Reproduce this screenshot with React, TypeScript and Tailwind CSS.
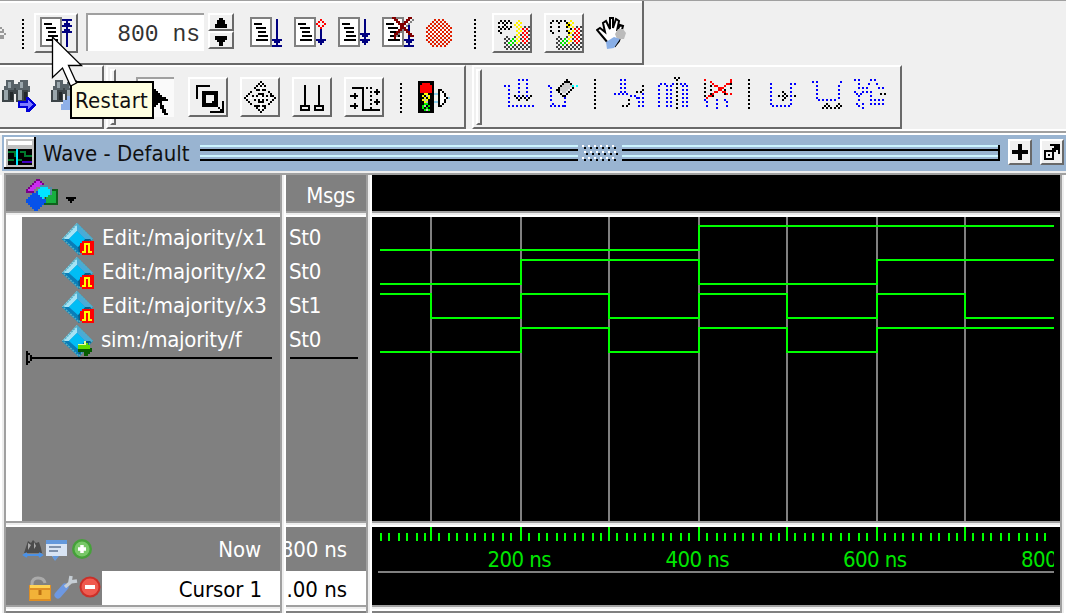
import React from "react";

type Kids = { children?: React.ReactNode };

/* Icon canvas drawn on a grid of 2px cells. */
function Icon({ w, h, className = "", children }: Kids & { w: number; h: number; className?: string }) {
  return (
    <svg width={w * 2} height={h * 2} viewBox={`0 0 ${w} ${h}`} shapeRendering="crispEdges" className={`block shrink-0 ${className}`}>
      {children}
    </svg>
  );
}

/* Rows of cells: "x,y" or "x,y>x2,y2:step", separated by blanks. */
function Dots({ c, d }: { c: string; d: string }) {
  const path = d
    .split(" ")
    .map((seg) => {
      const [line, s] = seg.split(":");
      const [a, b] = line.split(">");
      const [x, y] = a.split(",").map(Number);
      const [x2, y2] = (b ?? a).split(",").map(Number);
      const n = Math.max(Math.abs(x2 - x), Math.abs(y2 - y));
      const step = Number(s ?? 1);
      let out = "";
      for (let i = 0; i <= n; i += step) {
        const t = n ? i / n : 0;
        out += `M${Math.round(x + (x2 - x) * t)} ${Math.round(y + (y2 - y) * t)}h1v1h-1z`;
      }
      return out;
    })
    .join("");
  return <path fill={c} d={path} />;
}

const K = "#000";
const B = "#0000ff";
const N = "#000080";
const R = "#ff0000";

function Doc() {
  return (
    <>
      <path fill="#808080" d="M0 0h11v15H0z" />
      <path fill="#fff" d="M1 1h9v13H1z" />
      <path fill={K} d="M2 3h4v1H2zM3 5h5v1H3zM4 7h4v1H4zM4 9h5v1H4zM3 11h6v1H3z" />
    </>
  );
}

function Sep({ className = "" }: { className?: string }) {
  return (
    <Icon w={1} h={15} className={className}>
      <Dots c={K} d="0,0>0,14:2" />
    </Icon>
  );
}

function Button({ className = "", children }: Kids & { className?: string }) {
  return (
    <div className={`flex shrink-0 items-center justify-center border-t-2 border-r-2 border-b-2 border-l-2 border-t-white border-l-white border-r-[#696969] border-b-[#696969] bg-[#f0f0f0] ${className}`}>
      {children}
    </div>
  );
}

function Handle() {
  return <div className="ml-[2px] h-[56px] w-[6px] shrink-0 border-2 border-t-white border-l-white border-r-[#696969] border-b-[#696969]" />;
}

function Binoculars({ tail }: { tail: "arrow" | "lens" }) {
  return (
    <svg width="34" height="34" viewBox="0 0 34 34" className="block shrink-0" shapeRendering="crispEdges">
      <path fill="#586268" d="M4 2h8v4h4V4h4v2h-2V2h8v6h2v6H2V8h2z" />
      <path fill="#3d4549" d="M0 12h12v12H0zM14 12h12v12H14zM12 10h2v6h-2z" />
      <path fill="#9aa6ac" d="M2 12h4v10H2zM16 12h4v10h-4zM6 4h3v6H6zM18 4h3v6h-3z" />
      <path fill="#22282b" d="M8 14h3v8H8zM22 14h3v8h-3z" />
      {tail === "arrow" ? (
        <>
          <path fill="#0000d8" d="M16 23h8v-4h3l7 8-7 7h-3v-4h-8z" />
          <path fill="#7d7dff" d="M18 25h8v-3l5 5-5 4v-3h-8z" />
        </>
      ) : (
        <path fill="#8fb0e8" d="M12 22h4v-4h8v14H10v-6h2z" />
      )}
    </svg>
  );
}

function Scene({ loops }: { loops: boolean }) {
  return (
    <Icon w={16} h={15} className="mt-[3px] ml-[3px]">
      <Dots c="#404040" d="4,8 3,9>15,9:2 4,10>14,10:2 3,11>15,11:2 4,12>14,12:2 3,13>15,13:2 4,14>14,14:2 15,3>15,9:2 13,3 11,3>11,9:2 8,8 14,4" />
      <Dots c="#fff000" d="10,0 9,1 8,2 11,1 10,2>10,10:2 9,3>9,11:2 11,3 11,5" />
      <Dots c={R} d="13,5>13,11:2 12,4>12,10:2 14,4>14,10:2" />
      <Dots c="#00e000" d="6,10 7,11 8,10 7,9 6,12 5,11" />
      {loops ? (
        <Dots c={K} d="0,1>0,5:2 1,0>3,0:2 4,1>4,5:2 5,0>7,0:2 8,1>8,5:2 1,6 9,6 9,2 10,4" />
      ) : (
        <Dots c={K} d="0,1>0,3:2 1,0>5,0:2 6,1>6,3:2 1,4>5,4:2 2,1>4,3 4,1>2,3 0,5 1,6" />
      )}
    </Icon>
  );
}

function Gem({ badge }: { badge: "wave" | "arrow" }) {
  return (
    <svg width="34" height="34" viewBox="0 0 34 34" className="mt-[1px] block shrink-0">
      <path fill="#1890cc" d="M15 0l16 16-14 16L0 16z" />
      <path fill="#a5e3f5" d="M15 0L0 16h7l8-8z" />
      <path fill="#48abd8" d="M15 0l16 16h-8l-8-8z" />
      <path fill="#087db8" d="M0 16h7l9 8 1 8z" />
      <path fill="#075c86" d="M31 16h-8l-7 8 1 8z" />
      <path fill="#00bdf5" d="M15 8l8 8-7 8-9-8z" />
      <path fill="none" stroke="#58aec0" strokeWidth="1.5" strokeDasharray="2 1" d="M15 1l15 15-13 15L1 16z" />
      {badge === "wave" ? (
        <g shapeRendering="crispEdges">
          <path fill="#ff0000" d="M20 18h12v14H20v-2h-2V20h2z" />
          <path fill="none" stroke="#ffff00" strokeWidth="2" d="M20 29h3v-8h4v8h3" />
        </g>
      ) : (
        <g shapeRendering="crispEdges">
          <path fill="#075c00" d="M16 22h6v-5h2v2h2v2h2v2h2v4h-2v2h-2v2h-4v-4h-6z" />
          <path fill="#5edc00" d="M16 20h6v-4h2v2h2v2h2v4H16z" />
          <path fill="#e7ff9d" d="M16 19h6v-3h2v4h-8z" />
        </g>
      )}
    </svg>
  );
}

function TopBar() {
  return (
    <div className="flex h-[64px] w-[644px] items-start border-r-2 border-b-2 border-[#696969] bg-[#f0f0f0] pt-[12px] shadow-[inset_0_2px_0_#fff]">
      <Icon w={3} h={7} className="mt-[14px]">
        <Dots c="#999" d="0,0>2,3 2,3>0,5 0,2 0,4 1,5" />
      </Icon>
      <Sep className="mt-[6px] ml-[16px]" />
      <Button className="ml-[10px] h-[40px] w-[44px] justify-start pl-[4px]">
        <Icon w={16} h={15} className="-mt-[2px]">
          <Doc />
          <path fill={N} d="M13 1h1v14h-1zM11 1h5v1h-5zM12 3h3v1h-3zM11 4h5v1h-5zM12 6h3v1h-3zM11 7h5v1h-5z" />
        </Icon>
      </Button>
      <div className="ml-[8px] flex h-[38px] w-[118px] items-center justify-end border-t-2 border-l-2 border-[#a0a0a0] bg-white pt-[4px] pr-[4px] font-['Liberation_Mono','monospace'] text-[23px] text-[#333]">
        800 ns
      </div>
      <div className="ml-[4px] flex w-[26px] flex-col">
        <Button className="h-[18px] w-[26px]">
          <Icon w={6} h={5} className="mt-[2px]"><path fill={K} d="M2 0h2v1h1v2h1v2H0V3h1V1h1z" /></Icon>
        </Button>
        <Button className="h-[18px] w-[26px]">
          <Icon w={6} h={5} className="mt-[2px]"><path fill={K} d="M0 0h6v2H5v1H4v2H2V3H1V2H0z" /></Icon>
        </Button>
      </div>
      <div className="mt-[4px] ml-[16px] flex gap-[12px]">
        <Icon w={16} h={15}>
          <Doc />
          <path fill={N} d="M13 1h1v13h-1zM11 11h5v1h-5zM12 12h3v1h-3zM11 14h5v1h-5z" />
        </Icon>
        <Icon w={16} h={15}>
          <Doc />
          <path fill={N} d="M13 6h1v8h-1zM11 11h5v1h-5zM12 12h3v1h-3z" />
          <Dots c={R} d="13,1 12,2 14,2 11,3 15,3 12,4 14,4 13,5" />
        </Icon>
        <Icon w={16} h={15}>
          <Doc />
          <path fill={N} d="M13 1h1v13h-1zM11 8h5v1h-5zM12 9h3v1h-3zM11 11h5v1h-5zM12 12h3v1h-3z" />
        </Icon>
        <Icon w={16} h={15}>
          <Doc />
          <path fill={N} d="M13 4h1v10h-1zM11 11h5v1h-5zM12 12h3v1h-3zM11 14h5v1h-5z" />
          <g transform="translate(1 1)"><Dots c="#808080" d="5,0>14,8 14,0>5,9 6,0>14,8" /></g>
          <Dots c="#800000" d="5,0>14,9 6,0>15,9 14,0>6,9 13,0>6,8 6,10" />
        </Icon>
        <Icon w={13} h={14} className="mt-[2px]">
          <Dots c="#e02000" d="4,0>8,0:2 3,1>9,1:2 2,2>10,2:2 1,3>11,3:2 0,4>12,4:2 1,5>11,5:2 0,6>12,6:2 1,7>11,7:2 0,8>12,8:2 1,9>11,9:2 0,10>12,10:2 1,11>11,11:2 2,12>10,12:2 3,13>9,13:2" />
          <Dots c="#fff" d="2,5 0,7 2,7 4,5 4,7 6,5 6,7 8,5 8,7 7,6 9,6 10,5 10,7 5,6 3,6" />
        </Icon>
      </div>
      <Sep className="mt-[6px] ml-[22px]" />
      <Button className="ml-[16px] h-[40px] w-[40px]"><Scene loops={false} /></Button>
      <Button className="ml-[12px] h-[40px] w-[40px]"><Scene loops /></Button>
      <svg width="30" height="34" viewBox="0 0 30 34" className="mt-[3px] ml-[12px] shrink-0">
        <path fill="#fff" stroke="#000" strokeWidth="2" d="M12 27L7 21 1 14l3-2 5 4-2-9 3-2 4 8V2h3v10l3-9 3 2-2 10 3-6 3 1-4 15-4 5z" />
        <path fill="#bbb" d="M22 13h5l3 4-2 6h-7l-2-5z" />
        <path fill="#88aee6" d="M10 26l8-5 6 2-6 9-7 1z" />
      </svg>
    </div>
  );
}

function SecondBars() {
  return (
    <div className="flex h-[64px]">
      <div className="flex w-[104px] shrink-0 items-start border-t-2 border-r-2 border-b-2 border-t-white border-r-[#696969] border-b-[#696969] pt-[11px] pl-[2px]">
        <Binoculars tail="arrow" />
        <div className="ml-[15px]"><Binoculars tail="lens" /></div>
      </div>
      <div className="ml-[2px] flex w-[360px] shrink-0 items-start border-2 border-t-white border-l-white border-r-[#696969] border-b-[#696969] pt-[2px]">
        <Handle />
        <div className="mt-[8px] ml-[20px] flex gap-[12px]">
          <div className="mr-[2px] flex h-[40px] w-[38px] items-center justify-center border-t-2 border-l-2 border-[#a0a0a0] bg-[#fafafa]">
            <Icon w={11} h={15} className="mt-[3px] ml-[5px]">
              <path fill={K} d="M1 0h1v1h1v1h1v1h1v1h1v1h1v1h2v1h1v1H7v2h1v2h1v2h1v1H8v-1H7v-2H6V9H5v1H4v1H3v1H1z" />
            </Icon>
          </div>
          <Button className="h-[40px] w-[40px]">
            <Icon w={14} h={14} className="mt-[4px] ml-[4px]">
              <path fill={K} d="M0 0h7v1H1v6H0zM3 3h8v8H3zM5 5v4h4V5z" fillRule="evenodd" />
              <path fill={K} d="M8 8h1v1h1v1h1v1h1v1h1V8h1v6H7v-1h5v-1h-1v-1h-1v-1H9V9H8z" />
            </Icon>
          </Button>
          <Button className="h-[40px] w-[40px]">
            <Icon w={16} h={16}>
              <Dots c={K} d="8,0>5,3 8,0>10,2 8,15>5,12 8,15>10,13 0,8>3,5 0,8>3,11 15,8>12,5 15,8>12,11 4,7>7,7:2 9,7>13,7:2 5,9>7,9:2 9,9>12,9:2 7,4>7,7:2 9,4>9,7:2 7,10>7,13:2 9,10>9,13:2 6,4 10,4 6,12 10,12 8,2 8,6 8,10" />
              <Dots c="#fff" d="8,1>8,14:2 1,8>14,8:2" />
            </Icon>
          </Button>
          <Button className="h-[40px] w-[40px]">
            <Icon w={12} h={13} className="mt-[2px]">
              <path fill={K} fillRule="evenodd" d="M2 0h1v10h2v3H0v-3h2zM1 11v1h3v-1zM9 0h1v10h2v3H7v-3h2zM8 11v1h3v-1z" />
            </Icon>
          </Button>
          <Button className="h-[40px] w-[40px]">
            <Icon w={15} h={12} className="mt-[4px] ml-[2px]">
              <path fill={K} d="M1 0h6v11h8v1H6V1H1zM0 4h4v1H0zM2 3h1v3H2zM0 9h4v1H0zM2 8h1v3H2zM12 2h3v1h-3zM13 1h1v3h-1zM12 7h3v1h-3zM13 6h1v3h-1z" />
              <Dots c={K} d="8,0>10,0:2 10,2>10,10:2" />
            </Icon>
          </Button>
        </div>
        <Sep className="mt-[14px] ml-[16px]" />
        <Icon w={16} h={16} className="mt-[12px] ml-[16px]">
          <path fill={K} d="M0 0h8v16H0z" />
          <path fill={R} d="M2 1h4v1h1v4H1V2h1z" />
          <Dots c="#ffff00" d="3,6 4,6 2,7 5,7 3,8 4,9 2,9 5,8 3,10" />
          <Dots c="#00f000" d="3,11 4,11 2,12 5,12 4,13 2,13 5,14 3,14" />
          <Dots c="#c0c0c0" d="4,7 3,9 3,12 4,14 4,10" />
          <path fill="#8fd0ee" d="M8 6h2v1H8zM8 10h2v1H8zM15 8h1v1h-1z" />
          <path fill={K} d="M10 4h2v1h1v1h1v2h1v1h-1v2h-1v1h-1v1h-2z" />
          <path fill="#fff" d="M11 5h1v1h1v2h1v1h-1v2h-1v1h-1z" />
        </Icon>
      </div>
      <div className="ml-[6px] flex w-[430px] shrink-0 items-start border-2 border-t-white border-l-white border-r-[#696969] border-b-[#696969] pt-[2px]">
        <Handle />
        <Icon w={15} h={16} className="mt-[10px] ml-[22px]">
          <Dots c={B} d="0,3 2,3>2,13:2 4,13>14,13:2 7,0>7,8:2 9,0 11,0>11,8:2" />
          <Dots c={K} d="5,8>7,10 7,10>9,8 9,8>11,10 11,10>13,8" />
        </Icon>
        <Icon w={15} h={16} className="mt-[10px] ml-[14px]">
          <path fill="#ccc" d="M9 1h1v1h1v1h1v1h-1v1h-1v1H9v1H7V6H6V5H5V4h1V3h1V2h2z" />
          <Dots c={B} d="0,3 1,4 1,6>1,10:2 2,12 1,13>7,13:2 8,9>8,13:2" />
          <Dots c={K} d="4,5>9,0 10,1>12,3 12,4>8,8 4,5>7,8 9,1 5,5" />
          <Dots c="#00ffff" d="12,3 14,3" />
        </Icon>
        <Sep className="mt-[10px] ml-[16px]" />
        <Icon w={15} h={16} className="mt-[10px] ml-[18px]">
          <Dots c={B} d="3,0>3,6:2 5,0>5,6:2 0,7 2,7 4,7 6,7 8,8 10,8 12,9>12,13:2 14,9>14,13:2 11,9 14,7" />
          <Dots c={K} d="14,3 14,5 13,6 11,6 7,10 7,12 6,13 4,13" />
        </Icon>
        <Icon w={16} h={16} className="mt-[8px] ml-[14px]">
          <Dots c={B} d="0,4>0,14:2 1,3 3,3 4,4>4,14:2 6,4>6,14:2 7,3 11,3 12,4>12,14:2 14,4>14,14:2 13,3" />
          <Dots c={K} d="9,1>9,15:2 8,0 10,0" />
        </Icon>
        <Icon w={14} h={15} className="mt-[10px] ml-[14px]">
          <Dots c={K} d="0,2>0,8:2 3,3>3,7:2 4,8 10,3>10,7:2 13,2>13,5:2" />
          <Dots c={R} d="0,0 3,1>11,7 13,1>1,9 13,0 13,7" />
          <Dots c={B} d="0,10 1,11 1,13 6,10>6,14:2 10,10 11,11 11,13" />
        </Icon>
        <Sep className="mt-[10px] ml-[16px]" />
        <Icon w={13} h={12} className="mt-[14px] ml-[20px]">
          <Dots c={B} d="0,0>0,10:2 1,11>9,11:2 10,0>10,10:2 12,0" />
          <Dots c={K} d="4,6 6,4>8,6 8,6>6,8 6,6 12,6" />
        </Icon>
        <Icon w={15} h={14} className="mt-[12px] ml-[16px]">
          <Dots c={B} d="0,0 2,0>2,8:2 3,9>11,9:2 13,2>13,9:2 14,0" />
          <Dots c={K} d="5,13 6,12 7,11 8,12 9,13 7,13 11,13 12,12 13,11 14,12 13,13" />
        </Icon>
        <Icon w={16} h={15} className="mt-[10px] ml-[12px]">
          <Dots c={B} d="0,0 2,0>2,4:2 4,4 6,4 7,2 8,0 10,0 11,2 12,4 14,4 0,6 1,7 2,8 3,7 4,6 6,6 8,6>8,10:2 2,10 1,12 2,13 4,14 4,12 10,10>14,10:2 8,12>14,12:2" />
          <Dots c={K} d="13,7 15,7" />
        </Icon>
      </div>
    </div>
  );
}

function TitleBar() {
  return (
    <div className="ml-[2px] flex h-[36px] items-start bg-[#99b4d1] pt-[2px] pl-[2px]">
      <Icon w={16} h={16}>
        <path fill={K} d="M0 0h16v16H0z" />
        <path fill="#fff" d="M0 0h15v1H1v14H0z" />
        <path fill="#c0c0c0" d="M1 1h14v14H1z" />
        <path fill="#fff" d="M2 2h12v2H2z" />
        <path fill={K} d="M2 6h12v8H2z" />
        <path fill="#007a2c" d="M2 7h4v3H5V8H2zM8 7h3v2h3v1h-4V8H8zM2 11h3v1H2zM7 11h2v1H7z" />
        <path fill="#4000c0" d="M9 12h5v1H9z" />
        <path fill="#00e8ff" d="M6 6h1v8H6z" />
      </Icon>
      <div className="mt-[2px] ml-[7px] w-[157px] text-[22px] leading-[30px] tracking-[0.02px] text-[#111]">Wave - Default</div>
      <Rails className="w-[378px]" />
      <svg width="44" height="16" viewBox="0 0 44 16" shapeRendering="crispEdges" className="mt-[8px]">
        {[0, 6, 12].map((y) =>
          Array.from({ length: 6 }, (_, i) => {
            const x = 4 + i * 6 + (y === 6 ? 2 : 0);
            return (
              <g key={`${y}-${i}`}>
                <path fill="#fff" d={`M${x} ${y}h2v2h-2z`} />
                <path fill="#000" d={`M${x + 2} ${y + 2}h2v2h-2z`} />
              </g>
            );
          }),
        )}
      </svg>
      <Rails className="w-[378px] border-r-2 border-black" />
      <Button className="mt-[2px] ml-[8px] h-[26px] w-[24px]">
        <Icon w={8} h={8}><path fill={K} d="M3 0h2v3h3v2H5v3H3V5H0V3h3z" /></Icon>
      </Button>
      <Button className="mt-[2px] ml-[8px] h-[26px] w-[24px]">
        <Icon w={8} h={8}>
          <path fill={K} d="M3 0h5v5H7V3H6v1H5v4H0V3h4V2h1V1H3zM1 4v3h3V4z" fillRule="evenodd" />
          <path fill={K} d="M2 5h1v1H2z" />
        </Icon>
      </Button>
    </div>
  );
}

function Rails({ className }: { className: string }) {
  return (
    <div className={`mt-[8px] flex h-[16px] shrink-0 flex-col justify-between ${className}`}>
      <div className="h-[6px] border-t-2 border-b-2 border-t-[#ccf4ff] border-b-black" />
      <div className="h-[6px] border-t-2 border-b-2 border-t-[#ccf4ff] border-b-black" />
    </div>
  );
}

function Sash() {
  return (
    <div className="flex h-[6px] shrink-0 flex-col">
      <div className="h-[2px] bg-[#a0a0a0]" />
      <div className="h-[2px] bg-[#eeeeee]" />
      <div className="h-[2px] bg-white" />
    </div>
  );
}

function VSash() {
  return (
    <div className="flex w-[6px] shrink-0">
      <div className="w-[2px] bg-[#a0a0a0]" />
      <div className="w-[2px] bg-[#eeeeee]" />
      <div className="w-[2px] bg-white" />
    </div>
  );
}

const signals = [
  { name: "Edit:/majority/x1", value: "St0", start: 0, edges: [698] },
  { name: "Edit:/majority/x2", value: "St0", start: 0, edges: [520, 698, 876] },
  { name: "Edit:/majority/x3", value: "St1", start: 1, edges: [430, 520, 608, 698, 786, 876, 964] },
  { name: "sim:/majority/f", value: "St0", start: 0, edges: [520, 608, 698, 786, 876] },
];

function NamePane() {
  return (
    <div className="flex w-[274px] shrink-0 flex-col bg-[#808080]">
      <div className="flex h-[36px] shrink-0 items-start pt-[4px] pl-[20px]">
        <Icon w={16} h={16}>
          <path fill="#10601c" d="M10 5h6v8H9z" />
          <path fill="#18b040" d="M10 6h5v6h-5z" />
          <Dots c="#780088" d="0,5>5,0 6,0 7,1 8,2 0,6>3,6" />
          <path fill="#cc2df0" d="M5 1h2v1h1v1H7v1H5v1H4v1H1V5h1V4h1V3h1V2h1z" />
          <path fill="#0752e8" d="M5 6h1v1h1v1h1v1h1v1h1v2H9v1H8v1H7v1H6v1H4v-1H3v-1H2v-1H1v-1H0v-2h1V9h1V8h1V7h2z" />
          <path fill="#00e5ff" d="M7 4h4v1h1v3h-1v1H9v1H8V9H7V8H6V5h1z" />
          <path fill="#5a8aa4" d="M7 3h4v1H7zM12 4h1v4h-1z" />
        </Icon>
        <Icon w={5} h={3} className="mt-[18px] ml-[8px]"><path fill={K} d="M0 0h5v1H4v1H3v1H2V2H1V1H0z" /></Icon>
      </div>
      <Sash />
      <div className="h-[304px] shrink-0 border-l-[16px] border-white pt-[5px]">
        {signals.map((s, i) => (
          <div key={s.name} className="flex h-[34px] pl-[40px]">
            <Gem badge={i < 3 ? "wave" : "arrow"} />
            <div className={`leading-[32px] whitespace-nowrap ${i < 3 ? "pl-[6px] tracking-[0px]" : "pl-[5px] tracking-[-0.25px]"}`}>{s.name}</div>
          </div>
        ))}
        <div className="-mt-[7px] flex items-center pl-[4px]">
          <Icon w={3} h={7}><path fill={K} fillRule="evenodd" d="M0 0h1v1h1v1h1v3H2v1H1v1H0zM1 2v3h1V2z" /></Icon>
          <div className="h-[2px] w-[240px] bg-black" />
        </div>
      </div>
      <Sash />
      <div className="flex h-[44px] shrink-0 items-start pl-[16px]">
        <svg width="74" height="24" viewBox="0 0 74 24" className="mt-[11px] shrink-0">
          <path fill="#4c4c4c" d="M4 9l2-6 3 2 2-3 3 3 3-1 2 6 1 5H2z" />
          <path fill="#aaa" d="M6 5l3 2-3 5zM12 4l2 4-2 3z" />
          <path fill="none" stroke="#4b91e5" strokeWidth="2" d="M2 17h18M5 15l-3 2 3 2M17 15l3 2-3 2" />
          <path fill="#d8e4f4" d="M24 2h21v16H36l-3 4-3-4h-6z" />
          <path fill="#6398dc" d="M24 2h21v4H24zM30 18h7l-4 5z" />
          <path stroke="#7e91ac" strokeWidth="2" d="M27 9h12M27 13h9" />
          <circle cx="60" cy="11" r="10" fill="#46a03a" />
          <circle cx="60" cy="11" r="7.5" fill="#78c768" />
          <path stroke="#fff" strokeWidth="3.5" d="M56 11h8M60 7v8" />
        </svg>
        <div className="ml-auto pt-[1px] pr-[19px] leading-[44px] tracking-[-0.1px]">Now</div>
      </div>
      <div className="flex h-[34px] shrink-0">
        <svg width="96" height="34" viewBox="0 0 96 34" className="shrink-0">
          <path fill="none" stroke="#aaa" strokeWidth="3" d="M26 17v-4q0-6 6-6t7 5" />
          <path fill="#dd8e25" d="M23 14h22v16H23z" />
          <path fill="#ffd253" d="M24 14h20v3H24z" />
          <path fill="#f2b238" d="M24 19h20v9H24z" />
          <path stroke="#bd7112" strokeWidth="3" d="M34 19v5" />
          <path stroke="#6d98e2" strokeWidth="7" strokeLinecap="round" d="M52 24l7-8" />
          <path fill="none" stroke="#c6ced5" strokeWidth="3.5" d="M59 16l6-5M65 5l-1 6 7-1" />
          <circle cx="84" cy="16" r="10.5" fill="#ca3029" />
          <circle cx="84" cy="16" r="8.5" fill="#ef5b50" />
          <path stroke="#fff" strokeWidth="4" d="M79 16h10" />
        </svg>
        <div className="flex-1 bg-white pr-[18px] text-right leading-[37px] tracking-[-0.1px] text-black">Cursor 1</div>
      </div>
      <Sash />
      <div className="h-[2px]" />
    </div>
  );
}

function ValuePane() {
  return (
    <div className="flex w-[80px] shrink-0 flex-col overflow-hidden bg-[#808080]">
      <div className="h-[36px] shrink-0 pr-[11px] text-right leading-[42px] tracking-[-0.4px]">Msgs</div>
      <Sash />
      <div className="h-[304px] shrink-0 pt-[5px]">
        {signals.map((s) => (
          <div key={s.name} className="h-[34px] pl-[3px] leading-[32px] tracking-[-0.3px]">{s.value}</div>
        ))}
        <div className="-mt-[1px] ml-[4px] h-[2px] w-[68px] bg-black" />
      </div>
      <Sash />
      <div className="flex h-[44px] shrink-0 justify-end overflow-hidden pt-[1px] pr-[19px] leading-[44px] tracking-[-0.1px] whitespace-nowrap">800 ns</div>
      <div className="flex h-[34px] shrink-0 justify-end overflow-hidden bg-white pr-[19px] leading-[37px] tracking-[0px] whitespace-nowrap text-black">0.00 ns</div>
      <Sash />
      <div className="h-[2px]" />
    </div>
  );
}

const grid = [430, 520, 608, 698, 786, 876, 964];

function wave(i: number) {
  const s = signals[i];
  const y = (v: number) => (v ? 9 : 33) + i * 34;
  let v = s.start;
  let d = `M8 ${y(v)}`;
  s.edges.forEach((e) => {
    d += `H${e - 371}`;
    v = 1 - v;
    d += `V${y(v)}`;
  });
  return `${d}H682`;
}

function WavePane() {
  const even = (n: number) => 2 * Math.floor(n / 2);
  const ticks = [380, 388, 398, 406, 416, 424]
    .concat(grid.flatMap((g) => [1, 2, 3, 4, 5, 6, 7, 8, 9].map((j) => even(g + 9 * j))))
    .map((x) => x - 372);
  return (
    <div className="flex w-[688px] shrink-0 flex-col bg-black">
      <div className="h-[36px] shrink-0" />
      <Sash />
      <svg width="688" height="304" viewBox="0 0 688 304" shapeRendering="crispEdges" className="block shrink-0">
        {grid.map((x) => <path key={x} fill="#808080" d={`M${x - 372} 0h2v304h-2z`} />)}
        {signals.map((s, i) => <path key={s.name} d={wave(i)} fill="none" stroke="#00ff00" strokeWidth="2" />)}
      </svg>
      <Sash />
      <svg width="688" height="78" viewBox="0 0 688 78" shapeRendering="crispEdges" className="block shrink-0">
        {ticks.map((x) => <path key={x} fill="#00ff00" d={`M${x} 6h2v8h-2z`} />)}
        {grid.map((x) => <path key={x} fill="#00ff00" d={`M${x - 372} 0h2v14h-2z`} />)}
        <path fill="#808080" d="M6 44h676v2H6z" />
        <svg width="682" height="44">
          <g fill="#00e600" fontSize="22">
            <text x="115.5" y="40" textLength="64">200 ns</text>
            <text x="293.5" y="40" textLength="64">400 ns</text>
            <text x="471" y="40" textLength="64">600 ns</text>
            <text x="649" y="40" textLength="64">800 ns</text>
          </g>
        </svg>
      </svg>
      <Sash />
      <div className="h-[2px] bg-[#808080]" />
    </div>
  );
}

export default function App() {
  return (
    <div className="relative h-[613px] w-[1066px] overflow-hidden bg-[#f0f0f0] font-['DejaVu_Sans_Condensed','DejaVu_Sans','sans-serif'] text-[22px] text-white">
      <div className="h-[1px] bg-[#a0a0a0]" />
      <TopBar />
      <SecondBars />
      <div className="h-[2px] bg-white" />
      <div className="h-[2px] bg-[#a0a0a0]" />
      <div className="h-[2px] bg-white" />
      <TitleBar />
      <div className="ml-[2px] h-[2px] bg-[#eeeeee]" />
      <div className="ml-[4px] h-[2px] bg-[#a0a0a0]" />
      <div className="flex h-[438px] bg-white pl-[2px]">
        <div className="w-[2px] shrink-0 bg-[#eeeeee]" />
        <div className="w-[2px] shrink-0 bg-[#a0a0a0]" />
        <NamePane />
        <VSash />
        <ValuePane />
        <VSash />
        <WavePane />
        <VSash />
      </div>
      <div className="absolute top-[81px] left-[70px] flex h-[38px] w-[84px] items-center border-2 border-black bg-[#ffffe1] pt-[1px] pl-[3px] text-[22px] tracking-[0.3px] text-[#111]">
        Restart
      </div>
      <svg width="34" height="52" viewBox="0 0 34 52" className="absolute top-[36px] left-[51px]">
        <path fill="#fff" stroke="#000" strokeWidth="1.3" d="M1.500 1v40.500l10-9.500 8 18 6-3-8-17.500h13z" />
      </svg>
    </div>
  );
}
